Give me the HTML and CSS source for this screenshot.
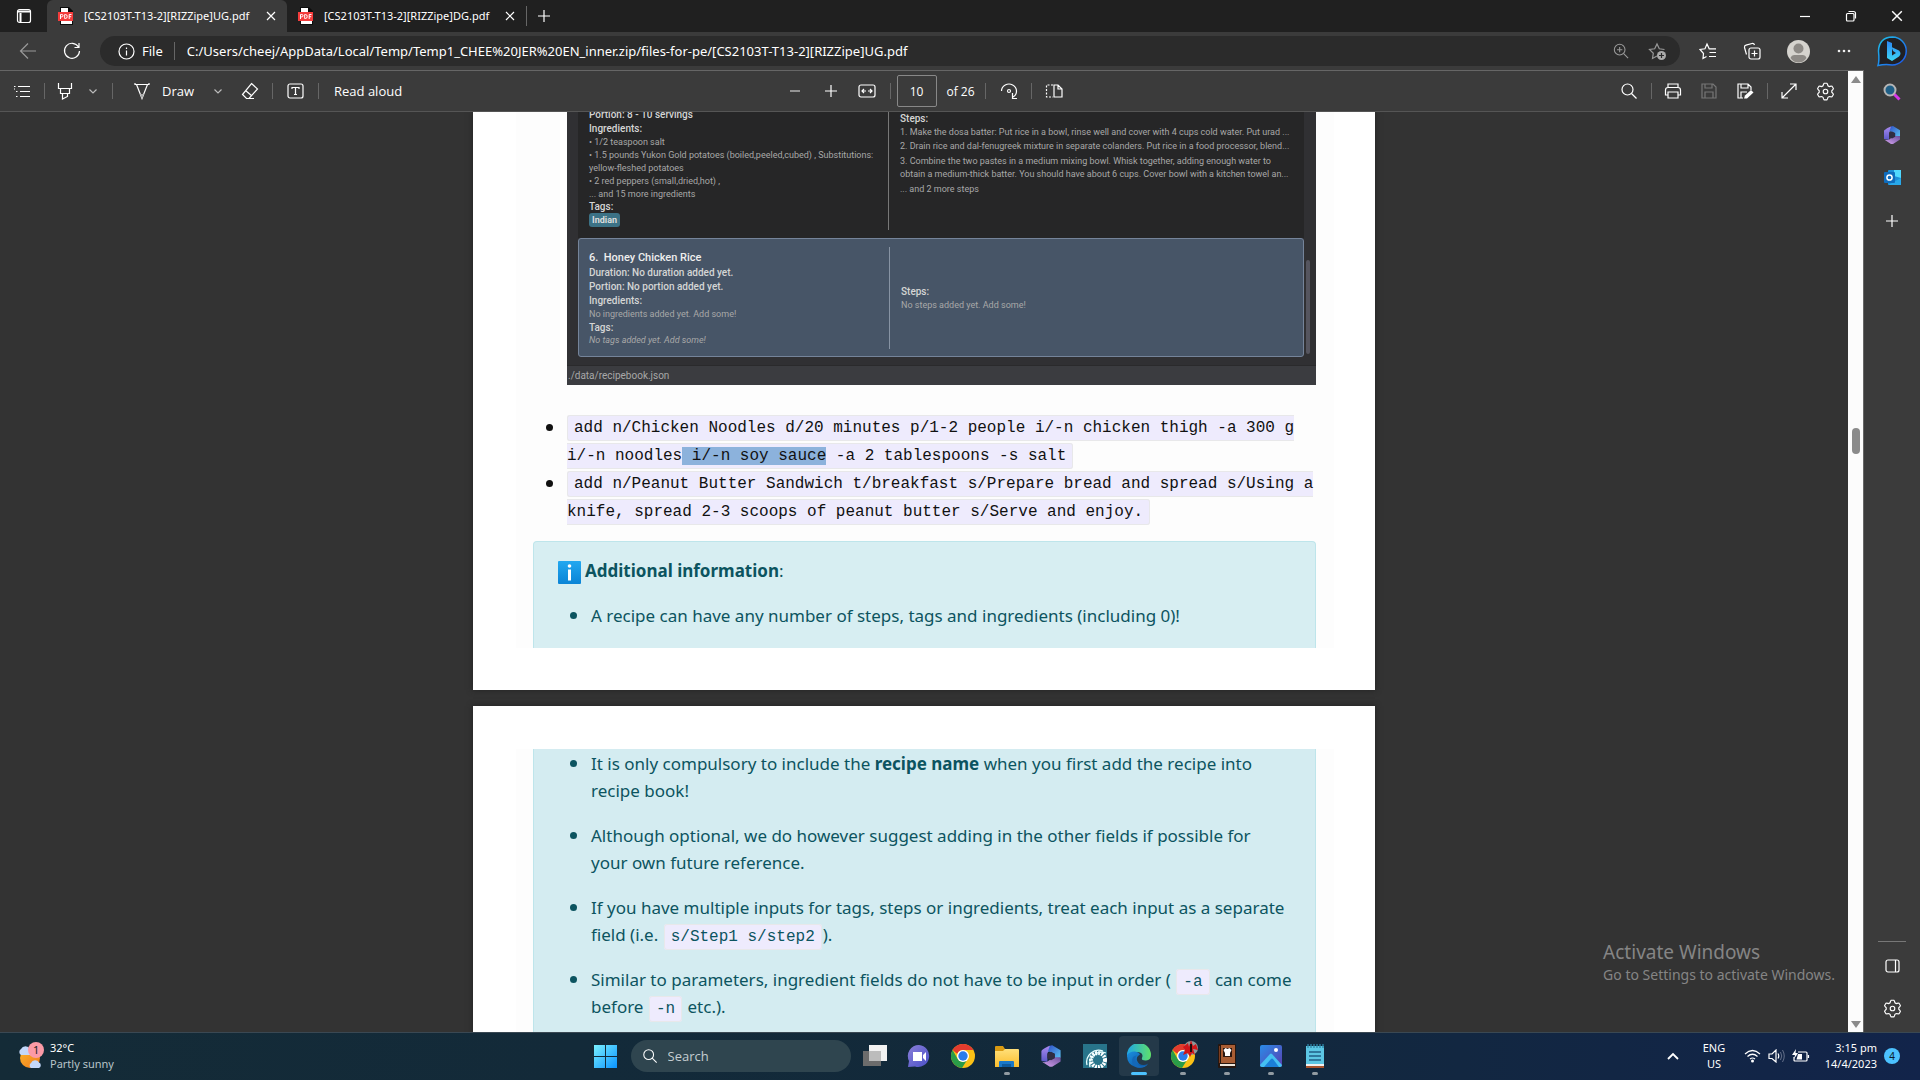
FILE: index.html
```html
<!DOCTYPE html>
<html lang="en">
<head>
<meta charset="utf-8">
<title>[CS2103T-T13-2][RIZZipe]UG.pdf</title>
<link rel="stylesheet" href="styles.css">
</head>
<body>
<svg class="defs" aria-hidden="true">
  <defs>
    <linearGradient id="gBlue" x1="0" y1="0" x2="1" y2="1"><stop offset="0" stop-color="#7af0ff"/><stop offset="1" stop-color="#0a93ff"/></linearGradient>
    <linearGradient id="gBing" x1="0" y1="0" x2="1" y2="1"><stop offset="0" stop-color="#1fc3e8"/><stop offset="1" stop-color="#1c53f0"/></linearGradient>
    <linearGradient id="gB" x1="0" y1="0" x2="0" y2="1"><stop offset="0" stop-color="#2a86f5"/><stop offset="1" stop-color="#3fd8f5"/></linearGradient>
    <linearGradient id="gPurple" x1="0" y1="0" x2="1" y2="1"><stop offset="0" stop-color="#8a7fd8"/><stop offset="1" stop-color="#4a50c8"/></linearGradient>
    <linearGradient id="gM1" x1="0" y1="0" x2="1" y2="1"><stop offset="0" stop-color="#2f50c8"/><stop offset="1" stop-color="#5cc4f0"/></linearGradient>
    <linearGradient id="gM2" x1="0" y1="0" x2="0" y2="1"><stop offset="0" stop-color="#a98af0"/><stop offset="1" stop-color="#5a58c8"/></linearGradient>
    <linearGradient id="gM3" x1="0" y1="1" x2="1" y2="0"><stop offset="0" stop-color="#d9a6f2"/><stop offset="1" stop-color="#6a4f9c"/></linearGradient>
    <linearGradient id="gFolder" x1="0" y1="0" x2="0" y2="1"><stop offset="0" stop-color="#ffe07a"/><stop offset="1" stop-color="#fbbd2c"/></linearGradient>
    <linearGradient id="gEdge1" x1="0" y1="0" x2="1" y2="0"><stop offset="0" stop-color="#1fa6e6"/><stop offset="1" stop-color="#5fe06a"/></linearGradient>
    <linearGradient id="gEdge2" x1="0" y1="0" x2="1" y2="1"><stop offset="0" stop-color="#1a8fe0"/><stop offset="1" stop-color="#0c4f9c"/></linearGradient>
    <linearGradient id="gPhoto" x1="0" y1="0" x2="1" y2="1"><stop offset="0" stop-color="#2a8ce8"/><stop offset="1" stop-color="#5a3fb0"/></linearGradient>
    <linearGradient id="gSun" x1="0" y1="0" x2="1" y2="1"><stop offset="0" stop-color="#fbb52c"/><stop offset="1" stop-color="#f07a1c"/></linearGradient>
    <symbol id="i-pdf" viewBox="0 0 16 18"><path d="M2 0h9l4 4v14H2z" fill="#0c0c0c"/><path d="M3 1h7v4h4v12H3z" fill="#fff"/><rect x="0" y="5" width="15" height="9" fill="#f33c3c"/><path d="M2.500 12V7.500h1.300a1.200 1.200 0 0 1 0 2.400H2.500M6.700 7.500v4h.8q1.700 0 1.700-2t-1.700-2zM11.200 12V7.500h2.300M11.200 9.700h2" fill="none" stroke="#fff" stroke-width="1"/></symbol>
    <symbol id="i-x" viewBox="0 0 10 10"><path d="M1 1l8 8M9 1l-8 8" class="ln"/></symbol>
    <symbol id="i-chev" viewBox="0 0 10 10"><path d="M1.500 3.500L5 7l3.500-3.500" class="ln"/></symbol>
    <symbol id="i-mag" viewBox="0 0 18 18"><circle cx="7.500" cy="7.500" r="5.500" class="ln"/><path d="M11.500 11.500L16.500 16.500" class="ln"/></symbol>
    <symbol id="i-gear" viewBox="0 0 20 20"><path d="M8 2.200l.6-.9h2.800l.6.900.6 1.800 1.300.8 2-.4 1 .1 1.400 2.400-.4 1-1.300 1.400v1.500l1.300 1.400.4 1-1.400 2.400-1 .1-2-.4-1.300.8-.6 1.800-.6.900H8.600l-.6-.9-.6-1.800-1.300-.8-2 .4-1-.1-1.400-2.400.4-1 1.300-1.400v-1.500L2.100 7.900l-.4-1 1.400-2.400 1-.1 2 .4L7.400 4z" class="ln"/><circle cx="10" cy="10" r="2.400" class="ln"/></symbol>
    <symbol id="i-plus" viewBox="0 0 14 14"><path d="M7 1v12M1 7h12" class="ln"/></symbol>
    <symbol id="i-365" viewBox="0 0 20 20"><path d="M9 1.500C6 2.500 2 5 2 6v8l5 1V8c0-1.500 3-3 4-3.500z" fill="url(#gM2)"/><path d="M9 1.500L11 1l7 4.200v6.300l-5 .5V8L7.500 6z" fill="url(#gM1)"/><path d="M18 11v3.500L11 19H9l-6.500-4.200C5 15.500 7 15 8.500 13.500L13 11z" fill="url(#gM3)"/><path d="M10 6.500l3.200 1.800v3.500L10 13.500l-3-1.700V8.300z" fill="#302d42"/></symbol>
    <symbol id="i-chrome" viewBox="0 0 24 24"><circle cx="12" cy="12" r="12" fill="#fbc116"/><path d="M1.600 6A12 12 0 0 1 22.400 6H12a6 6 0 0 0-5.600 4z" fill="#e33b2e"/><path d="M1.600 6A12 12 0 0 0 11 24l6-9.500A6 6 0 0 1 6.700 15z" fill="#2a9c48"/><circle cx="12" cy="12" r="6" fill="#fff"/><circle cx="12" cy="12" r="4.700" fill="#2a7cea"/></symbol>
  </defs>
</svg>

<div class="desktop">
  <header class="titlebar">
    <button class="workspace" aria-label="Tab actions"><svg width="16" height="16" viewBox="0 0 16 16"><rect x="1.500" y="1.500" width="13" height="13" rx="2" class="ln"/><path d="M2 3.500h12M4.500 5v9" class="ln thick"/></svg></button>
    <div class="tab active"><svg class="pdf"><use href="#i-pdf"/></svg><span class="tab-name">[CS2103T-T13-2][RIZZipe]UG.pdf</span><button class="tab-close" aria-label="Close tab"><svg width="10" height="10"><use href="#i-x"/></svg></button></div>
    <div class="tab"><svg class="pdf"><use href="#i-pdf"/></svg><span class="tab-name">[CS2103T-T13-2][RIZZipe]DG.pdf</span><button class="tab-close" aria-label="Close tab"><svg width="10" height="10"><use href="#i-x"/></svg></button></div>
    <button class="new-tab" aria-label="New tab"><svg width="14" height="14"><use href="#i-plus"/></svg></button>
    <div class="window-buttons">
      <button aria-label="Minimize"><svg width="12" height="12" viewBox="0 0 12 12"><path d="M1 6.500h10" class="ln"/></svg></button>
      <button aria-label="Restore"><svg width="12" height="12" viewBox="0 0 12 12"><rect x="1.500" y="3.500" width="7.500" height="7.500" rx="1" class="ln"/><path d="M3.500 1.500h5a2 2 0 0 1 2 2v5" class="ln"/></svg></button>
      <button aria-label="Close"><svg width="12" height="12"><use href="#i-x"/></svg></button>
    </div>
  </header>

  <nav class="address-row">
    <button class="nav-button dim" aria-label="Back"><svg width="18" height="18" viewBox="0 0 18 18"><path d="M17 9H2M9 1.500L1.500 9 9 16.500" class="ln"/></svg></button>
    <button class="nav-button" aria-label="Refresh"><svg width="18" height="18" viewBox="0 0 18 18"><path d="M15.500 5A7.500 7.500 0 1 0 16.500 9M16 1v4.500h-4.500" class="ln"/></svg></button>
    <div class="address">
      <svg width="17" height="17" viewBox="0 0 17 17"><circle cx="8.500" cy="8.500" r="7.500" class="ln"/><path d="M8.500 7.500v5M8.500 4.500v1.500" class="ln"/></svg>
      <label class="scheme" for="url">File</label>
      <input id="url" class="url" type="text" value="C:/Users/cheej/AppData/Local/Temp/Temp1_CHEE%20JER%20EN_inner.zip/files-for-pe/[CS2103T-T13-2][RIZZipe]UG.pdf">
      <button class="dim" aria-label="Zoom"><svg width="16" height="16" viewBox="0 0 18 18"><circle cx="7.500" cy="7.500" r="6" class="ln"/><path d="M12 12l5 5M4.500 7.500h6M7.500 4.500v6" class="ln"/></svg></button>
      <button class="dim" aria-label="Add to favorites"><svg width="18" height="18" viewBox="0 0 18 18"><path d="M9 14l-4.500 2.500.8-5.200L1.500 7.500l5.200-.7L9 2l2.300 4.800 5.200.7" class="ln"/><circle cx="13.500" cy="13.500" r="4.500" fill="#aaa"/><path d="M13.500 11v5M11 13.500h5" stroke="#2b2b2b" stroke-width="1.200"/></svg></button>
    </div>
    <button class="nav-button" aria-label="Favorites"><svg width="18" height="18" viewBox="0 0 18 18"><path d="M7.500 14.500L4 16.500l.5-5L1 7.500l5-.7L8 2l2.200 4.800h6.800M10.500 10.500h6.500M10 14.500h7" class="ln"/></svg></button>
    <button class="nav-button" aria-label="Collections"><svg width="18" height="18" viewBox="0 0 18 18"><rect x="6" y="6" width="11" height="11" rx="2" class="ln"/><path d="M11.500 8.500v6M8.500 11.500h6M3.500 12.500L1.500 5.500q-.3-1.800 1.500-2.300l6-1.700q2-.3 2.500 1.500" class="ln"/></svg></button>
    <button class="nav-button avatar" aria-label="Profile"><svg width="23" height="23" viewBox="0 0 23 23"><circle cx="11.500" cy="11.500" r="11.500" fill="#d5d3ce"/><circle cx="11.500" cy="8.500" r="5" fill="#8d8a86"/><path d="M3.500 18q1-3 4-3h8q3 0 4 3-3 4.500-8 4.500T3.500 18" fill="#8d8a86"/></svg></button>
    <button class="nav-button" aria-label="Settings and more"><svg width="14" height="4" viewBox="0 0 14 4"><circle cx="2" cy="2" r="1.300" fill="#eee"/><circle cx="7" cy="2" r="1.300" fill="#eee"/><circle cx="12" cy="2" r="1.300" fill="#eee"/></svg></button>
    <button class="nav-button bing" aria-label="Bing"><svg width="32" height="32" viewBox="0 0 32 32"><path d="M16.500 2A14 14 0 1 1 16 30Q9 29 2 30.500 3.500 26 2.500 16 3 2.500 16.500 2z" fill="#202024" stroke="url(#gBing)" stroke-width="1.500"/><path d="M11 6l5 2v12.500l4-2.500-3-2-1.500-4L23 15.500q3 3 0 6l-7 4.500-5-3z" fill="url(#gB)"/></svg></button>
  </nav>

  <div class="browser-body">
    <main class="viewer">
      <div class="viewer-main">
        <div class="pdf-toolbar">
          <div class="group">
            <button class="w32" aria-label="Contents"><svg width="18" height="14" viewBox="0 0 18 14"><path d="M5 2.500h12M7 7.500h10M7 12.500h10M1 2.500h1.500M3 7.500h1.500M3 12.500h1.500M1 5h1" class="ln"/></svg></button>
            <span class="sep"></span>
            <button class="w30" aria-label="Highlight"><svg width="16" height="18" viewBox="0 0 16 18"><path d="M1.500 1v5.500h13V1M3.500 6.500v5h9v-5M5.500 11.500v5.500l5-2.500v-3" class="ln"/></svg></button>
            <button class="w26 soft" aria-label="Highlight options"><svg width="10" height="10"><use href="#i-chev"/></svg></button>
            <span class="sep"></span>
            <button class="draw"><svg width="20" height="18" viewBox="0 0 20 18"><path d="M3 1v1.500h14V1M4.500 2.500l5.500 14 5.500-14" class="ln"/><path d="M8 12h4l-2 5z" fill="#aaa"/></svg>Draw</button>
            <button class="w32 soft" aria-label="Draw options"><svg width="10" height="10"><use href="#i-chev"/></svg></button>
            <button class="w32" aria-label="Erase"><svg width="18" height="18" viewBox="0 0 18 18"><path d="M10.500 1.500l6 5.500-8.500 9.500H5.500L1.500 12.500zM4.500 8.500l6.500 5.500M7 16.500h6" class="ln"/></svg></button>
            <span class="sep"></span>
            <button class="w34" aria-label="Add text"><svg width="17" height="16" viewBox="0 0 17 16"><rect x="1" y="1" width="15" height="14" rx="2" class="ln"/><path d="M5 6V4.500h7V6M8.500 4.500v7M7 11.500h3" class="ln"/></svg></button>
            <span class="sep"></span>
            <button class="read">Read aloud</button>
          </div>
          <div class="group middle-group">
            <button class="w36" aria-label="Zoom out"><svg width="10" height="4" viewBox="0 0 10 4"><path d="M0 2h10" stroke="#aaa" stroke-width="1.600"/></svg></button>
            <button class="w36" aria-label="Zoom in"><svg width="14" height="14"><use href="#i-plus"/></svg></button>
            <button class="w36" aria-label="Fit to width"><svg width="18" height="14" viewBox="0 0 18 14"><rect x="1" y="1" width="16" height="12" rx="2" class="ln"/><path d="M4 7h4M10 7h4M6 5L4 7l2 2M12 5l2 2-2 2" class="ln"/></svg></button>
            <span class="sep"></span>
            <input class="page-number" type="text" value="10" aria-label="Page number">
            <span class="of">of 26</span>
            <span class="sep"></span>
            <button class="w34" aria-label="Rotate"><svg width="18" height="18" viewBox="0 0 18 18"><path d="M1.500 9A7.500 7 0 1 1 13 15M12.500 11v5.500H17" class="ln"/><circle cx="9" cy="9" r="1.500" class="ln"/></svg></button>
            <span class="sep"></span>
            <button class="w32" aria-label="Page view"><svg width="18" height="14" viewBox="0 0 18 14"><path d="M9 1h4l4 4v8H9zM13 1v4h4" class="ln"/><path d="M8 1H1.500v12H8" class="ln" stroke-dasharray="2 1.500"/></svg></button>
          </div>
          <div class="group end">
            <button class="w36" aria-label="Find"><svg width="18" height="18"><use href="#i-mag"/></svg></button>
            <span class="sep small"></span>
            <button class="w36" aria-label="Print"><svg width="18" height="16" viewBox="0 0 18 16"><path d="M4 4.500V1h10v3.500M4 12H1.500V7q0-2.500 2.500-2.500h10Q16.500 4.500 16.500 7v5H14M4 9h10v6H4z" class="ln"/></svg></button>
            <button class="w36 faint" aria-label="Save"><svg width="16" height="16" viewBox="0 0 16 16"><path d="M1 1h11l3 3v11H1zM4 1v4h7V1M4 15V9h8v6" class="ln"/></svg></button>
            <button class="w36" aria-label="Save as"><svg width="17" height="16" viewBox="0 0 17 16"><path d="M6 15H1V1h10l3 3v3M4 1v4h7V1M4 15V9h6" class="ln"/><path d="M7 15.500l1-3 6-5.500 2.500 2.500-6.500 6z" fill="#fff"/></svg></button>
            <span class="sep small"></span>
            <button class="w36" aria-label="Full screen"><svg width="16" height="16" viewBox="0 0 16 16"><path d="M1 15L15 1M9 1h6v6M1 9v6h6" class="ln"/></svg></button>
            <button class="w36" aria-label="PDF settings"><svg width="19" height="19"><use href="#i-gear"/></svg></button>
          </div>
        </div>

        <div class="pages">
          <article class="page first">
            <div class="paper">
              <section class="shot">
                <div class="recipe-list">
                  <div class="recipe">
                    <div class="col-left scrolled">
                      <b>Portion: 8 - 10 servings</b>
                      <b>Ingredients:</b>
                      <p>• 1/2 teaspoon salt</p>
                      <p>• 1.5 pounds Yukon Gold potatoes (boiled,peeled,cubed) , Substitutions:<br>yellow-fleshed potatoes</p>
                      <p>• 2 red peppers (small,dried,hot) ,</p>
                      <p>... and 15 more ingredients</p>
                      <b>Tags:</b>
                      <span class="tag">Indian</span>
                    </div>
                    <div class="col-right top">
                      <b>Steps:</b>
                      <p>1. Make the dosa batter: Put rice in a bowl, rinse well and cover with 4 cups cold water. Put urad ...</p>
                      <p>2. Drain rice and dal-fenugreek mixture in separate colanders. Put rice in a food processor, blend...</p>
                      <p>3. Combine the two pastes in a medium mixing bowl. Whisk together, adding enough water to<br>obtain a medium-thick batter. You should have about 6 cups. Cover bowl with a kitchen towel an...</p>
                      <p>... and 2 more steps</p>
                    </div>
                  </div>
                  <div class="recipe selected">
                    <div class="col-left">
                      <h3>6.&nbsp; Honey Chicken Rice</h3>
                      <b>Duration: No duration added yet.</b>
                      <b>Portion: No portion added yet.</b>
                      <b>Ingredients:</b>
                      <p>No ingredients added yet. Add some!</p>
                      <b>Tags:</b>
                      <p><i>No tags added yet. Add some!</i></p>
                    </div>
                    <div class="col-right middle">
                      <b>Steps:</b>
                      <p>No steps added yet. Add some!</p>
                    </div>
                  </div>
                </div>
                <span class="shot-thumb"></span>
                <div class="shot-status">./data/recipebook.json</div>
              </section>

              <ul class="commands">
                <li><code>add n/Chicken Noodles d/20 minutes p/1-2 people i/-n chicken thigh -a 300 g<br>i/-n noodles<mark> i/-n soy sauce</mark> -a 2 tablespoons -s salt</code></li>
                <li><code>add n/Peanut Butter Sandwich t/breakfast s/Prepare bread and spread s/Using a<br>knife, spread 2-3 scoops of peanut butter s/Serve and enjoy.</code></li>
              </ul>

              <section class="alert opening">
                <p class="alert-title"><svg width="23" height="23" viewBox="0 0 23 23"><defs><linearGradient id="gInfo" x1="0" y1="0" x2="0" y2="1"><stop offset="0" stop-color="#22a8f0"/><stop offset="1" stop-color="#0b84d6"/></linearGradient></defs><rect width="23" height="23" rx="1" fill="url(#gInfo)"/><circle cx="11.500" cy="5" r="1.800" fill="#fff"/><path d="M10 8.500h3v11h-3z" fill="#fff"/></svg><span><strong>Additional information</strong>:</span></p>
                <ul><li>A recipe can have any number of steps, tags and ingredients (including 0)!</li></ul>
              </section>
            </div>
          </article>

          <article class="page second">
            <div class="paper">
              <section class="alert rest">
                <ul>
                  <li>It is only compulsory to include the <strong>recipe name</strong> when you first add the recipe into<br>recipe book!</li>
                  <li>Although optional, we do however suggest adding in the other fields if possible for<br>your own future reference.</li>
                  <li>If you have multiple inputs for tags, steps or ingredients, treat each input as a separate<br>field (i.e. <code>s/Step1 s/step2</code>).</li>
                  <li>Similar to parameters, ingredient fields do not have to be input in order ( <code>-a</code> can come<br>before <code>-n</code> etc.).</li>
                </ul>
              </section>
            </div>
          </article>
        </div>
        <aside class="watermark"><p class="big">Activate Windows</p><p>Go to Settings to activate Windows.</p></aside>
      </div>
      <div class="scrollbar">
        <svg width="10" height="7" viewBox="0 0 10 7"><path d="M5 0l5 7H0z" fill="#8b8b8b"/></svg>
        <span class="thumb"></span>
        <svg width="10" height="7" viewBox="0 0 10 7"><path d="M0 0h10L5 7z" fill="#8b8b8b"/></svg>
      </div>
    </main>

    <aside class="sidebar">
      <button aria-label="Search"><svg width="18" height="18" viewBox="0 0 18 18"><path d="M11 11l5.500 5.500" stroke="#d636e8" stroke-width="3"/><circle cx="7" cy="7" r="5.500" fill="#1f5f86" stroke="#b5b5b5" stroke-width="2"/></svg></button>
      <button aria-label="Microsoft 365"><svg width="20" height="20"><use href="#i-365"/></svg></button>
      <button aria-label="Outlook"><svg width="17" height="17" viewBox="0 0 17 17"><rect x="4" y="1" width="13" height="15" rx="1" fill="#1b8fd8"/><path d="M10 1h7v8l-7-2z" fill="#50d9ff"/><path d="M4 16l13-7v7z" fill="#28a8ea"/><rect y="3" width="11" height="11" rx="1" fill="#0f6cbd"/><circle cx="5.500" cy="8.500" r="2.600" fill="none" stroke="#fff" stroke-width="1.500"/></svg></button>
      <button aria-label="Customize"><svg width="14" height="14"><use href="#i-plus"/></svg></button>
      <span class="rule"></span>
      <button aria-label="Hide sidebar"><svg width="15" height="14" viewBox="0 0 15 14"><rect x="1" y="1" width="13" height="12" rx="2" class="ln"/><path d="M10.500 1v12" class="ln"/></svg></button>
      <button aria-label="Sidebar settings"><svg width="19" height="19"><use href="#i-gear"/></svg></button>
    </aside>
  </div>

  <footer class="taskbar">
    <div class="weather">
      <svg width="28" height="28" viewBox="0 0 28 28"><circle cx="12" cy="16" r="10" fill="url(#gSun)"/><path d="M3 13a3.500 3.500 0 0 1 0-6 5 5 0 0 1 9 0 3 3 0 0 1 0 6zM13 26a3 3 0 0 1 0-5 4.500 4.500 0 0 1 8-.5 3 3 0 0 1 0 5.500z" fill="#c3d8fa"/><circle cx="18" cy="8" r="8" fill="#fb9aa6"/><text x="15" y="12" class="weather-count">1</text></svg>
      <p>32°C<br><span>Partly sunny</span></p>
    </div>
    <div class="apps">
      <button aria-label="Start"><svg width="23" height="23" viewBox="0 0 23 23"><path d="M0 0h11v11H0zM12 0h11v11H12zM0 12h11v11H0zM12 12h11v11H12z" fill="url(#gBlue)"/></svg></button>
      <label class="search"><svg width="16" height="16"><use href="#i-mag"/></svg><input type="text" placeholder="Search" aria-label="Search"></label>
      <button aria-label="Task view"><svg width="24" height="24" viewBox="0 0 24 24"><rect x="6" y="1" width="18" height="16" fill="#f2f2f2"/><rect y="7" width="18" height="15" fill="#6c6c6c"/><rect x="6" y="7" width="12" height="10" fill="#bcbcbc"/></svg></button>
      <button aria-label="Chat"><svg width="24" height="24" viewBox="0 0 24 24"><path d="M12 1a11 11 0 1 1-4 21.500L1 23l1-6A11 11 0 0 1 12 1z" fill="url(#gPurple)"/><path d="M6 8h9v9H6zM16 11l3-3v9l-3-3z" fill="#fff"/></svg></button>
      <button aria-label="Chrome"><svg width="24" height="24"><use href="#i-chrome"/></svg></button>
      <button class="open" aria-label="File Explorer"><svg width="24" height="24" viewBox="0 0 24 24"><path d="M0 3q0-1 1-1h7l2 3h13v4H0z" fill="#d99a12"/><path d="M0 7h8l2-2h13q1 0 1 1v17H0z" fill="url(#gFolder)"/><path d="M4 23v-5q0-1 1-1h13q1 0 1 1v5z" fill="#1a78c8"/><path d="M7 20h9v3H7z" fill="#0f5a9c"/></svg></button>
      <button aria-label="Microsoft 365"><svg width="24" height="24"><use href="#i-365"/></svg></button>
      <button aria-label="Turbine"><svg width="24" height="24" viewBox="0 0 24 24"><rect width="24" height="24" fill="#28748a"/><circle cx="15" cy="16" r="7" fill="none" stroke="#fff" stroke-width="4" stroke-dasharray="2 1"/><path d="M4 21a12 12 0 0 1 16-14M7 23A12 12 0 0 1 23 9" fill="none" stroke="#e8ffff" stroke-width="1.300"/></svg></button>
      <button class="current" aria-label="Edge"><svg width="24" height="24" viewBox="0 0 24 24"><path d="M0 11A12 12 0 0 1 24 11q0 5-5 5.500-5 .2-4-2.500Q17 9 11 8 4 7.500 0 13z" fill="url(#gEdge1)"/><path d="M0 11q3-4 8-3.500 4 .5 5 3-4 2-3 6 2 5 7 4.500 3 0 4.500-2A12 12 0 0 1 0 12z" fill="url(#gEdge2)"/><path d="M9 12q-2 6 3 9.500 4 2 9-1.500Q17 25 10 23.500 3 20 6 13q2-2 5-1.500z" fill="#1468b8"/></svg></button>
      <button class="open" aria-label="Chrome profile"><svg width="30" height="34" viewBox="0 0 30 34"><svg x="3" y="5" width="24" height="24"><use href="#i-chrome"/></svg><circle cx="23" cy="9" r="7" fill="#8f9697"/><path d="M15 8l5-4 1 4 2-7 2 6 3-2 2 6-5-1 2 6-3-2-2 4-2-4-5 2 2-5z" fill="#d01418"/><path d="M22 5h2v8h-2z" fill="#240a0a"/></svg></button>
      <button class="open" aria-label="Recipe book"><svg width="20" height="24" viewBox="0 0 20 24"><rect x="1" y="0" width="18" height="24" rx="1" fill="#26160f"/><rect x="4" y="1" width="14" height="18" fill="#a85d34"/><path d="M2 2h1v17H2z" fill="#7a3d20"/><path d="M6 4h9v9H6z" fill="#2a1710"/><path d="M6.500 6l2-2 2 1 2-1 2 2-1.500 3v3h-5V9z" fill="#fff"/><path d="M3 20h15v2H3z" fill="#eee6dc"/></svg></button>
      <button class="open" aria-label="Photos"><svg width="22" height="22" viewBox="0 0 22 22"><rect width="22" height="22" rx="2" fill="url(#gPhoto)"/><path d="M0 20L10 9q1-1 2 0l10 11q0 2-2 2H2q-2 0-2-2z" fill="#45c0f2"/><path d="M4 22l7-8q1-1 2 0l6 8z" fill="#1b7fd8"/><circle cx="16" cy="5" r="2" fill="#fff"/></svg></button>
      <button class="open" aria-label="Notepad"><svg width="20" height="24" viewBox="0 0 20 24"><rect x="1" y="2" width="18" height="20" fill="#5cc6e4"/><path d="M3 0v4M6 0v4M9 0v4M12 0v4M15 0v4M18 0v4" stroke="#2f87a8" stroke-width="1.300"/><path d="M4 8h12M4 12h12M4 16h12" stroke="#1f5f86" stroke-width="1.500"/><path d="M1 20h18v2H1z" fill="#f0f0f0"/><path d="M1 22h18v2H1z" fill="#a8522c"/></svg></button>
    </div>
    <div class="tray">
      <button class="w36" aria-label="Show hidden icons"><svg width="12" height="8" viewBox="0 0 12 8"><path d="M1 7l5-5 5 5" class="ln bold"/></svg></button>
      <p class="lang">ENG<br>US</p>
      <svg width="17" height="14" viewBox="0 0 17 14"><path d="M1 5q7.500-7 15 0M3.500 7.500q5-4.500 10 0M6 10q2.500-2 5 0" class="ln"/><circle cx="8.500" cy="12" r="1.500" fill="#fff"/></svg>
      <svg width="17" height="14" viewBox="0 0 17 14"><path d="M1 5h3l4-4v12L4 9.500H1zM10 4.500q1.500 2.500 0 5" class="ln"/><path d="M12.500 3q2.500 4 0 8M14.500 1q3.500 6 0 12" stroke="#64708a" fill="none"/></svg>
      <svg width="18" height="14" viewBox="0 0 18 14"><path d="M6 3h8q1 0 1 1v7q0 1-1 1H3q-1 0-1-1V8M16.500 6v3" class="ln"/><path d="M6 5h4v5.500H4.500zM4 0L0 6h3l-1 4 4-6H3.500z" fill="#fff"/></svg>
      <p class="clock">3:15 pm<br>14/4/2023</p>
      <span class="notify">4</span>
    </div>
  </footer>
</div>
</body>
</html>
```
FILE: styles.css
```css
* { box-sizing: border-box; }
body { margin: 0; background: #202020; font-family: "Noto Sans", "Open Sans", sans-serif; font-size: 12px; color: #fff; }
p, ul, h3 { margin: 0; padding: 0; }
button, input { font: inherit; color: inherit; background: none; border: 0; padding: 0; outline: 0; }
button { display: flex; align-items: center; justify-content: center; flex: none; }
svg { flex: none; display: block; }
.defs { position: absolute; width: 0; height: 0; }
.ln { fill: none; stroke: currentColor; stroke-width: 1.2; }
.ln.thick { stroke-width: 2; }
.ln.bold { stroke-width: 1.8; }
.dim { color: #999; }
.soft { color: #bbb; }
.faint { color: #777; }

.desktop { height: 100vh; display: flex; flex-direction: column; overflow: hidden; white-space: nowrap; }

/* Title bar */
.titlebar { display: flex; height: 32px; flex: none; background: #202020; }
.workspace { width: 47px; }
.tab { display: flex; align-items: center; width: 239px; padding: 0 11px 1px; }
.tab.active { background: #3b3b3b; border-radius: 6px 6px 0 0; width: 240px; }
.pdf { width: 16px; height: 18px; }
.tab-name { flex: 1; margin-left: 10px; font-size: 11px; }
.tab-close { width: 10px; }
.new-tab { width: 36px; position: relative; }
.new-tab::before { content: ""; position: absolute; left: 0; top: 6px; width: 1px; height: 20px; background: #666; }
.window-buttons { display: flex; margin-left: auto; }
.window-buttons button { width: 46px; }

/* Address row */
.address-row { display: flex; align-items: center; height: 38px; flex: none; padding: 0 2px 0 6px; background: #3b3b3b; }
.address-row .nav-button { width: 44px; }
.address-row .avatar { width: 48px; }
.address-row .bing { width: 52px; }
.address { flex: 1; display: flex; align-items: center; height: 30px; margin: 0 6px; padding: 0 14px 0 18px; border-radius: 15px; background: #2b2b2b; }
.scheme { margin-left: 7px; padding-right: 11px; border-right: 1px solid #666; font-size: 13px; line-height: 18px; }
.url { flex: 1; margin-left: 12px; font-size: 13px; }
.address button { width: 18px; margin-left: 18px; }

/* PDF viewer */
.browser-body { flex: 1; display: flex; min-height: 0; background: #3b3b3b; }
.viewer { flex: 1; display: flex; min-width: 0; border-top: 1px solid #666; border-right: 1px solid #666; }
.viewer-main { flex: 1; display: flex; flex-direction: column; position: relative; min-width: 0; background: #333; }
.pdf-toolbar { display: grid; grid-template-columns: 1fr auto 1fr; height: 41px; flex: none; border-bottom: 1px solid #555; background: #3b3b3b; padding: 0 5px 0 6px; }
.group { display: flex; align-items: center; font-family: "Open Sans", sans-serif; font-size: 13px; }
.group.middle-group { padding-right: 3px; }
.group.end { justify-content: flex-end; }
.sep { width: 12px; height: 16px; background: linear-gradient(#666, #666) center / 1px 100% no-repeat; }
.sep.small { width: 8px; }
.w26 { width: 26px; } .w30 { width: 30px; } .w32 { width: 32px; } .w34 { width: 34px; } .w36 { width: 36px; }
.draw { width: 84px; gap: 10px; justify-content: flex-start; padding-left: 14px; }
.read { padding-left: 10px; }
.page-number { width: 40px; height: 32px; border: 1px solid #888; border-radius: 2px; text-align: center; font-size: 12px; }
.of { width: 43px; padding-left: 10px; font-size: 12px; }
.pages { flex: 1; min-height: 0; overflow: hidden; display: flex; flex-direction: column; align-items: center; gap: 16px; }
.page { width: 902px; flex: none; background: #fff; color: #111; padding: 0 41px 0 43px; box-shadow: 0 0 6px #222; }
.page.first { padding-bottom: 42px; }
.page.second { padding-top: 43px; }
.paper { background: #fdfdfd; padding: 0 18px; }
.scrollbar { width: 15px; background: #fcfcfc; display: flex; flex-direction: column; align-items: center; padding: 5px 0 4px; }
.thumb { width: 8px; height: 26px; margin: 345px 0 auto; border-radius: 4px; background: #8b8b8b; }

/* Embedded recipe app picture */
.shot { margin-left: 33px; height: 273px; background: #303033; color: #a8a8a8; display: grid; grid-template-columns: 1fr 12px; grid-template-rows: 245px 8px 20px; font-family: Roboto, sans-serif; font-size: 9px; line-height: 13px; overflow: hidden; }
.recipe-list { margin-left: 11px; }
.recipe { display: grid; grid-template-columns: 311px 1fr; height: 126px; padding-bottom: 8px; background: #262627; }
.recipe b { display: block; font-size: 10px; line-height: 14px; color: #d5d5d5; font-weight: 500; }
.recipe p + b { line-height: 13px; }
.col-left { padding-left: 11px; border-right: 1px solid #777; }
.scrolled { display: flex; flex-direction: column; align-items: flex-start; height: 122px; margin-top: -4px; }
.recipe .scrolled p + b { line-height: 12px; }
.tag { padding: 0 3px; line-height: 14px; border-radius: 3px; background: #3c7286; color: #ddd; font-size: 9px; font-weight: 700; }
.col-right { padding-left: 11px; }
.col-right.top p + p { margin-top: 1px; }
.col-right.top p + p + p { margin-top: 2px; }
.recipe.selected { height: 119px; padding: 8px 0 7px; border: 1px solid #75849a; border-radius: 3px; background: #475567; }
.selected .col-left { margin-left: -1px; border-color: #8793a3; padding-top: 3px; }
.recipe h3 { font-size: 11px; line-height: 16px; color: #eee; font-weight: 500; }
.middle { display: flex; flex-direction: column; justify-content: center; }
.shot-thumb { width: 4px; height: 94px; margin: 148px 0 0 2px; border-radius: 2px; background: #55555f; }
.shot-status { grid-row: 3; grid-column: 1 / 3; border-top: 1px solid #2a2a2c; background: #3b3c40; padding-left: 1px; font-size: 10px; line-height: 20px; }

/* Document text */
code { font-family: "Liberation Mono", monospace; font-size: 16px; background: #eeebfd; border: 1px solid #e8e8ea; border-radius: 3px; padding: 3px 6px; }
mark { background: #8cb2dc; color: inherit; }
.commands { margin: 29px 0 15px; padding-left: 33px; font-family: "Liberation Mono", monospace; font-size: 16px; line-height: 28px; }
.commands li, .alert li { list-style: none; position: relative; }
.commands li::before, .alert li::before { content: ""; position: absolute; left: -21px; top: 10px; width: 7px; height: 7px; border-radius: 50%; background: currentColor; }
.alert { margin-left: -1px; border: 1px solid #bee5eb; border-bottom: 0; background: #d7eef2; color: #0c5460; font-size: 17px; line-height: 27px; padding: 0 24px; }
.alert.opening { height: 107px; padding-top: 14px; border-radius: 4px 4px 0 0; }
.alert ul { padding-left: 33px; }
.alert-title { display: flex; align-items: center; gap: 4px; margin-bottom: 18px; }
.alert-title svg { margin-top: 5px; }
.alert.rest { border-top: 0; background: #d4ecf1; padding-top: 1px; padding-bottom: 40px; }
.alert.rest li + li { margin-top: 18px; }
.alert code { margin: 0 1px; line-height: 20px; }

.watermark { position: absolute; right: 13px; bottom: 47px; color: #858585; font-size: 14px; line-height: 20px; }
.watermark .big { font-size: 19px; line-height: 26px; }

/* Sidebar */
.sidebar { width: 56px; display: flex; flex-direction: column; align-items: center; padding: 0 0 2px; }
.sidebar button { width: 40px; height: 43px; }
.rule { width: 28px; height: 1px; background: #777; margin-top: auto; margin-bottom: 2px; }

/* Taskbar */
.taskbar { display: grid; grid-template-columns: 1fr auto 1fr; align-items: center; height: 48px; flex: none; background: linear-gradient(90deg, #142b37, #12293b 60%, #12244a); border-top: 1px solid #3a4853; line-height: 16px; padding-bottom: 1px; }
.weather { display: flex; align-items: center; gap: 4px; padding-left: 18px; font-size: 11px; }
.weather span { color: #b8c4c9; }
.weather-count { font-size: 11px; fill: #222; }
.apps { display: flex; align-items: center; }
.apps button { width: 44px; height: 40px; position: relative; }
.apps .open::after { content: ""; position: absolute; left: 19px; bottom: 1px; width: 6px; height: 3px; border-radius: 2px; background: #929ba2; }
.apps .current { width: 40px; margin: 0 2px; border-radius: 4px; background: #243949; }
.apps .current::after { content: ""; position: absolute; left: 12px; bottom: 1px; width: 16px; height: 3px; border-radius: 2px; background: #4cc2ff; }
.search { display: flex; align-items: center; gap: 10px; width: 220px; height: 32px; margin: 0 2px 0 3px; padding-left: 11px; border-radius: 16px; background: #2f454f; }
.search input { width: 150px; font-family: "Open Sans", sans-serif; font-size: 13px; }
.search input::placeholder { color: #c5cdd1; opacity: 1; }
.tray { display: flex; align-items: center; justify-content: flex-end; gap: 7px; padding-right: 20px; font-size: 11px; }
.lang { text-align: center; width: 32px; margin-right: 7px; }
.clock { text-align: right; width: 60px; }
.notify { width: 16px; height: 16px; border-radius: 50%; background: #4cc2ff; color: #0b1c2c; text-align: center; font-size: 10px; }
```
